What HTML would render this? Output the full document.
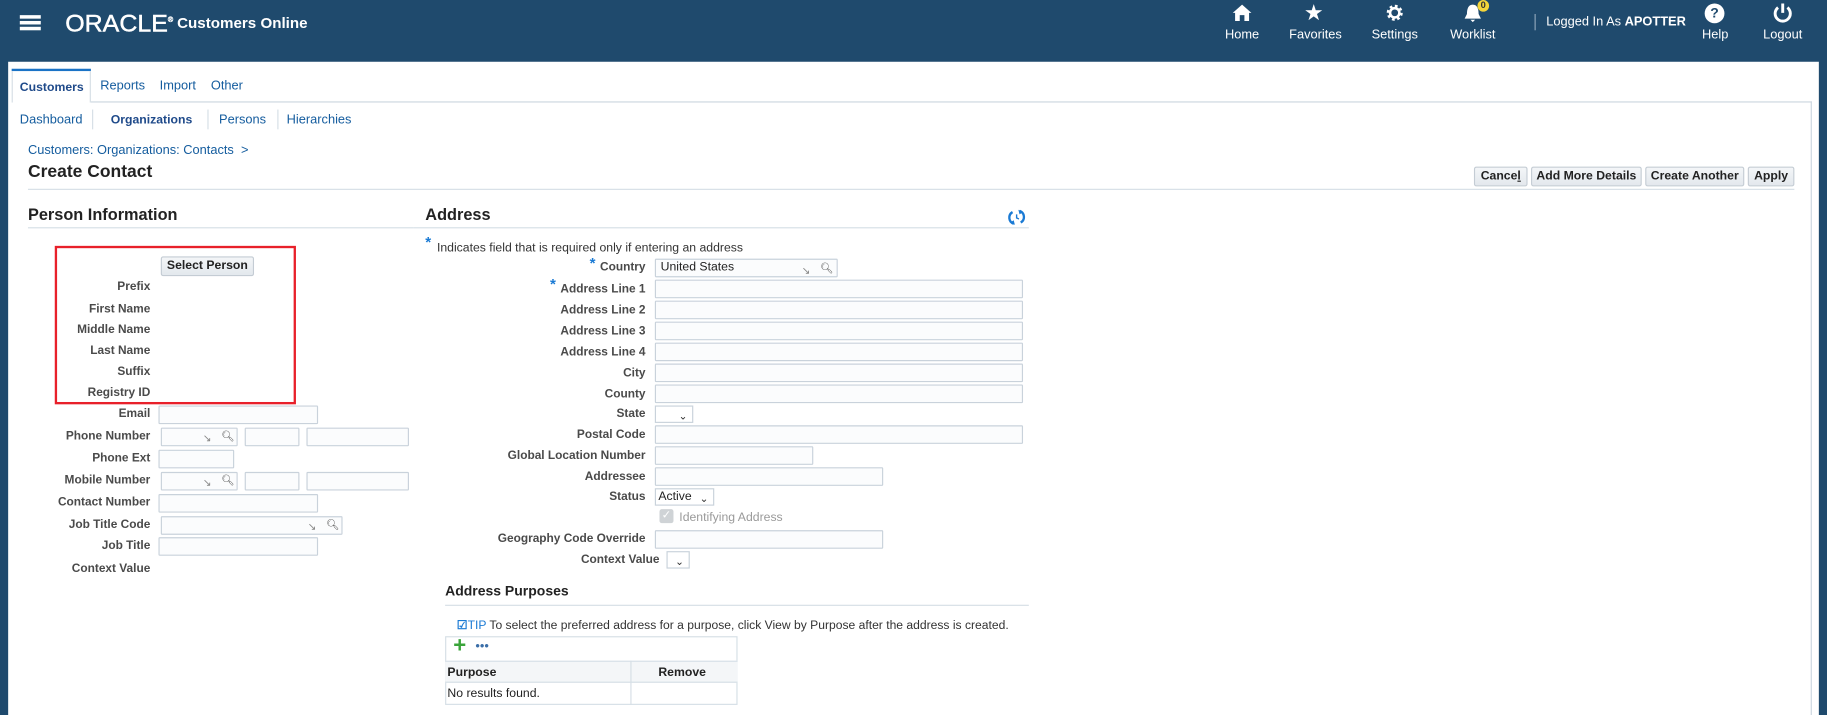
<!DOCTYPE html>
<html><head><meta charset="utf-8">
<style>
html,body{margin:0;padding:0;width:1827px;height:715px;overflow:hidden;background:#1f4a6d;font-family:"Liberation Sans",Arial,sans-serif;}
#w{position:absolute;left:0;top:0;width:1568px;height:614px;transform:scale(1.16518);transform-origin:0 0;}
.a{position:absolute;white-space:nowrap;}
.panel{position:absolute;left:7px;top:53px;width:1554px;height:561px;background:#fff;}
.lnk{color:#145c9e;font-size:11px;}
.lbl{position:absolute;font-size:10.2px;font-weight:bold;color:#4a4a4a;text-align:right;white-space:nowrap;}
.inp{position:absolute;height:15px;border:1px solid #c9d2db;background:#fbfcfd;box-sizing:border-box;border-radius:1px;}
.btn{position:absolute;height:17px;border:1px solid #c4ccd4;background:linear-gradient(#f4f6f8,#e3e8ed);font-size:10.5px;font-weight:bold;color:#222;text-align:center;line-height:15px;box-sizing:border-box;border-radius:2px;}
.hl{position:absolute;height:1px;background:#d6dfe6;}
.hd{position:absolute;font-size:14px;font-weight:bold;color:#222;}
.nav{position:absolute;color:#fff;font-size:11px;text-align:center;width:70px;}
.sel{position:absolute;height:15px;border:1px solid #c9d2db;box-sizing:border-box;font-size:10.5px;color:#222;line-height:13px;padding-left:2px;}
.chev{position:absolute;right:4px;top:2px;font-size:9px;color:#333;}
.ico{position:absolute;font-size:9px;color:#888;}
</style></head><body>
<div id="w">
<div class="a" style="left:17px;top:13px;width:18px;height:3px;background:#fff;box-shadow:0 5px 0 #fff,0 10px 0 #fff;"></div>
<div class="a" style="left:56px;top:9px;color:#fff;font-size:21px;-webkit-text-stroke:0.4px #fff;transform:scaleX(1.02);transform-origin:0 0;">ORACLE<sup style="font-size:6px;">®</sup></div>
<div class="a" style="left:152px;top:12px;color:#fff;font-size:13px;font-weight:bold;">Customers Online</div>

<svg class="a" style="left:1057px;top:2px" width="18" height="18" viewBox="0 0 18 18"><path d="M9 2 L1 9 L3 9 L3 16 L7 16 L7 11 L11 11 L11 16 L15 16 L15 9 L17 9 Z" fill="#fff"/></svg>
<div class="nav" style="left:1031px;top:24px">Home</div>
<div class="a" style="left:1119px;top:0px;color:#fff;font-size:19px;">★</div>
<div class="nav" style="left:1094px;top:24px">Favorites</div>
<svg class="a" style="left:1188px;top:3px" width="18" height="16" viewBox="0 0 18 18"><circle cx="9" cy="9" r="6" fill="none" stroke="#fff" stroke-width="3.5" stroke-dasharray="2.4 2.3"/><circle cx="9" cy="9" r="4.5" fill="none" stroke="#fff" stroke-width="2.5"/></svg>
<div class="nav" style="left:1162px;top:24px">Settings</div>
<svg class="a" style="left:1256px;top:3px" width="16" height="17" viewBox="0 0 16 17"><path d="M8 1 C4 1 3 5 3 9 L1 13 L15 13 L13 9 C13 5 12 1 8 1 Z M6 14 L10 14 L8 16 Z" fill="#fff"/></svg>
<div class="a" style="left:1268px;top:0px;width:10px;height:10px;border-radius:5px;background:#f5d63a;color:#333;font-size:8px;text-align:center;line-height:10px;font-weight:bold;">0</div>
<div class="nav" style="left:1229px;top:24px">Worklist</div>
<div class="a" style="left:1317px;top:12px;width:1px;height:14px;background:#8ea6bb;"></div>
<div class="a" style="left:1327px;top:13px;color:#fff;font-size:11px;">Logged In As <b>APOTTER</b></div>
<div class="a" style="left:1463px;top:3px;width:17px;height:17px;border-radius:9px;background:#fff;color:#1f4a6d;font-size:12px;font-weight:bold;text-align:center;line-height:17px;">?</div>
<div class="nav" style="left:1437px;top:24px">Help</div>
<svg class="a" style="left:1521px;top:2px" width="18" height="18" viewBox="0 0 18 18"><path d="M5 4.5 A6.5 6.5 0 1 0 13 4.5" fill="none" stroke="#fff" stroke-width="2.5"/><path d="M9 1 L9 9" stroke="#fff" stroke-width="2.5"/></svg>
<div class="nav" style="left:1495px;top:24px">Logout</div>

<div class="panel"></div>
<div class="a" style="left:10px;top:59px;width:68px;height:2px;background:#1a73c6;"></div>
<div class="a" style="left:10px;top:61px;width:68px;height:27px;border-left:1px solid #d6dfe6;border-right:1px solid #d6dfe6;box-sizing:border-box;"></div>
<div class="a lnk" style="left:17px;top:69px;color:#1f4a8a;font-weight:bold;font-size:10.5px;">Customers</div>
<div class="a lnk" style="left:86px;top:68px;">Reports</div>
<div class="a lnk" style="left:137px;top:68px;">Import</div>
<div class="a lnk" style="left:181px;top:68px;">Other</div>
<div class="hl" style="left:78px;top:87px;width:1477px;background:#ccd6df;"></div>
<div class="a" style="left:1554px;top:87px;width:1px;height:527px;background:#ccd6df;"></div>
<div class="a lnk" style="left:17px;top:97px;">Dashboard</div>
<div class="a" style="left:79px;top:94px;width:1px;height:17px;background:#d6dfe6;"></div>
<div class="a lnk" style="left:95px;top:97px;font-weight:bold;color:#1f4a8a;font-size:10.5px;">Organizations</div>
<div class="a" style="left:178px;top:94px;width:1px;height:17px;background:#d6dfe6;"></div>
<div class="a lnk" style="left:188px;top:97px;">Persons</div>
<div class="a" style="left:238px;top:94px;width:1px;height:17px;background:#d6dfe6;"></div>
<div class="a lnk" style="left:246px;top:97px;">Hierarchies</div>

<div class="a lnk" style="left:24px;top:123px;">Customers: Organizations: Contacts &nbsp;&gt;</div>
<div class="a" style="left:24px;top:139px;font-size:15px;font-weight:bold;color:#222;">Create Contact</div>
<div class="hl" style="left:24px;top:162px;width:1516px;"></div>
<div class="btn" style="left:1265px;top:143px;width:46px;">Cance<u>l</u></div>
<div class="btn" style="left:1314px;top:143px;width:95px;">Add More Details</div>
<div class="btn" style="left:1412px;top:143px;width:85px;">Create Another</div>
<div class="btn" style="left:1500px;top:143px;width:40px;">Apply</div>

<div class="hd" style="left:24px;top:176px;">Person Information</div>
<div class="hl" style="left:24px;top:195px;width:331px;"></div>
<div class="a" style="left:47px;top:211px;width:207px;height:136px;border:2px solid #e8202a;box-sizing:border-box;"></div>
<div class="btn" style="left:138px;top:220px;width:80px;height:17px;">Select Person</div>
<div class="lbl" style="right:1439px;top:241px;">Prefix</div>
<div class="lbl" style="right:1439px;top:260px;">First Name</div>
<div class="lbl" style="right:1439px;top:278px;">Middle Name</div>
<div class="lbl" style="right:1439px;top:296px;">Last Name</div>
<div class="lbl" style="right:1439px;top:314px;">Suffix</div>
<div class="lbl" style="right:1439px;top:332px;">Registry ID</div>
<div class="lbl" style="right:1439px;top:350px;">Email</div>
<div class="inp" style="left:136px;top:348px;width:137px;height:16px;"></div>
<div class="lbl" style="right:1439px;top:369px;">Phone Number</div>
<div class="inp" style="left:138px;top:367px;width:66px;height:16px;"><span class="ico" style="left:35px;top:3px;">↘</span><span class="ico" style="left:51px;top:1px;color:#555;">🔍︎</span></div>
<div class="inp" style="left:210px;top:367px;width:47px;height:16px;"></div>
<div class="inp" style="left:263px;top:367px;width:88px;height:16px;"></div>
<div class="lbl" style="right:1439px;top:388px;">Phone Ext</div>
<div class="inp" style="left:136px;top:386px;width:65px;height:16px;"></div>
<div class="lbl" style="right:1439px;top:407px;">Mobile Number</div>
<div class="inp" style="left:138px;top:405px;width:66px;height:16px;"><span class="ico" style="left:35px;top:3px;">↘</span><span class="ico" style="left:51px;top:1px;color:#555;">🔍︎</span></div>
<div class="inp" style="left:210px;top:405px;width:47px;height:16px;"></div>
<div class="inp" style="left:263px;top:405px;width:88px;height:16px;"></div>
<div class="lbl" style="right:1439px;top:426px;">Contact Number</div>
<div class="inp" style="left:136px;top:424px;width:137px;height:16px;"></div>
<div class="lbl" style="right:1439px;top:445px;">Job Title Code</div>
<div class="inp" style="left:138px;top:443px;width:156px;height:16px;"><span class="ico" style="left:125px;top:3px;">↘</span><span class="ico" style="left:141px;top:1px;color:#555;">🔍︎</span></div>
<div class="lbl" style="right:1439px;top:463px;">Job Title</div>
<div class="inp" style="left:136px;top:461px;width:137px;height:16px;"></div>
<div class="lbl" style="right:1439px;top:483px;">Context Value</div>

<div class="hd" style="left:365px;top:176px;">Address</div>
<div class="hl" style="left:355px;top:195px;width:528px;"></div>
<svg class="a" style="left:865px;top:179px" width="15" height="15" viewBox="0 0 15 15"><path d="M4 3 A5.5 5.5 0 0 0 5 13" fill="none" stroke="#1a7ad4" stroke-width="2"/><path d="M11 12 A5.5 5.5 0 0 0 10 2" fill="none" stroke="#1a7ad4" stroke-width="2"/><path d="M2 12 L6 14 L5 10 Z M13 3 L9 1 L10 5 Z" fill="#1a7ad4"/><path d="M7.5 5 L7.5 8 L9.5 9" stroke="#1a7ad4" stroke-width="1.2" fill="none"/></svg>
<div class="a" style="left:365px;top:200px;color:#1a7ad4;font-size:13px;font-weight:bold;">*</div>
<div class="a" style="left:375px;top:207px;font-size:10.5px;color:#333;">Indicates field that is required only if entering an address</div>

<div class="a" style="left:506px;top:218px;color:#1a7ad4;font-size:13px;font-weight:bold;">*</div>
<div class="lbl" style="right:1014px;top:224px;">Country</div>
<div class="inp" style="left:562px;top:222px;width:157px;height:16px;font-size:10.5px;color:#222;padding-left:4px;line-height:13px;">United States<span class="ico" style="left:125px;top:3px;">↘</span><span class="ico" style="left:141px;top:1px;color:#555;">🔍︎</span></div>
<div class="a" style="left:472px;top:236px;color:#1a7ad4;font-size:13px;font-weight:bold;">*</div>
<div class="lbl" style="right:1014px;top:243px;">Address Line 1</div>
<div class="inp" style="left:562px;top:240px;width:316px;height:16px;"></div>
<div class="lbl" style="right:1014px;top:261px;">Address Line 2</div>
<div class="inp" style="left:562px;top:258px;width:316px;height:16px;"></div>
<div class="lbl" style="right:1014px;top:279px;">Address Line 3</div>
<div class="inp" style="left:562px;top:276px;width:316px;height:16px;"></div>
<div class="lbl" style="right:1014px;top:297px;">Address Line 4</div>
<div class="inp" style="left:562px;top:294px;width:316px;height:16px;"></div>
<div class="lbl" style="right:1014px;top:315px;">City</div>
<div class="inp" style="left:562px;top:312px;width:316px;height:16px;"></div>
<div class="lbl" style="right:1014px;top:333px;">County</div>
<div class="inp" style="left:562px;top:330px;width:316px;height:16px;"></div>
<div class="lbl" style="right:1014px;top:350px;">State</div>
<div class="sel" style="left:562px;top:348px;width:33px;"><span class="chev">&#8964;</span></div>
<div class="lbl" style="right:1014px;top:368px;">Postal Code</div>
<div class="inp" style="left:562px;top:365px;width:316px;height:16px;"></div>
<div class="lbl" style="right:1014px;top:386px;">Global Location Number</div>
<div class="inp" style="left:562px;top:383px;width:136px;height:16px;"></div>
<div class="lbl" style="right:1014px;top:404px;">Addressee</div>
<div class="inp" style="left:562px;top:401px;width:196px;height:16px;"></div>
<div class="lbl" style="right:1014px;top:421px;">Status</div>
<div class="sel" style="left:562px;top:419px;width:51px;">Active<span class="chev">&#8964;</span></div>
<div class="a" style="left:566px;top:437px;width:12px;height:12px;border-radius:2px;background:#cfd3d6;color:#fff;font-size:10px;text-align:center;line-height:12px;">✓</div>
<div class="a" style="left:583px;top:438px;font-size:10.5px;color:#9a9a9a;">Identifying Address</div>
<div class="lbl" style="right:1014px;top:457px;">Geography Code Override</div>
<div class="inp" style="left:562px;top:455px;width:196px;height:16px;"></div>
<div class="lbl" style="right:1002px;top:475px;">Context Value</div>
<div class="sel" style="left:572px;top:473px;width:20px;"><span class="chev" style="right:4px;">&#8964;</span></div>

<div class="a" style="left:382px;top:500px;font-size:12px;font-weight:bold;color:#222;">Address Purposes</div>
<div class="hl" style="left:382px;top:519px;width:501px;"></div>
<div class="a" style="left:392px;top:531px;font-size:10.4px;color:#333;"><span style="color:#1a7ad4;font-weight:bold;">☑</span><span style="color:#1a7ad4;">TIP</span> To select the preferred address for a purpose, click View by Purpose after the address is created.</div>
<div class="a" style="left:382px;top:546px;width:251px;height:59px;border:1px solid #d6dfe6;box-sizing:border-box;"></div>
<div class="a" style="left:389px;top:545px;font-size:19px;font-weight:bold;color:#3aa43a;line-height:20px;">+</div>
<div class="a" style="left:408px;top:549px;font-size:11px;color:#3a6ea8;letter-spacing:0px;">•••</div>
<div class="a" style="left:382px;top:567px;width:251px;height:19px;background:#f4f6f8;border-top:1px solid #d6dfe6;border-bottom:1px solid #d6dfe6;box-sizing:border-box;"></div>
<div class="a" style="left:541px;top:567px;width:1px;height:38px;background:#d6dfe6;"></div>
<div class="a" style="left:384px;top:571px;font-size:10.5px;font-weight:bold;color:#222;">Purpose</div>
<div class="a" style="left:565px;top:571px;font-size:10.5px;font-weight:bold;color:#222;">Remove</div>
<div class="a" style="left:384px;top:589px;font-size:10.5px;color:#222;">No results found.</div>
</div>
</body></html>
